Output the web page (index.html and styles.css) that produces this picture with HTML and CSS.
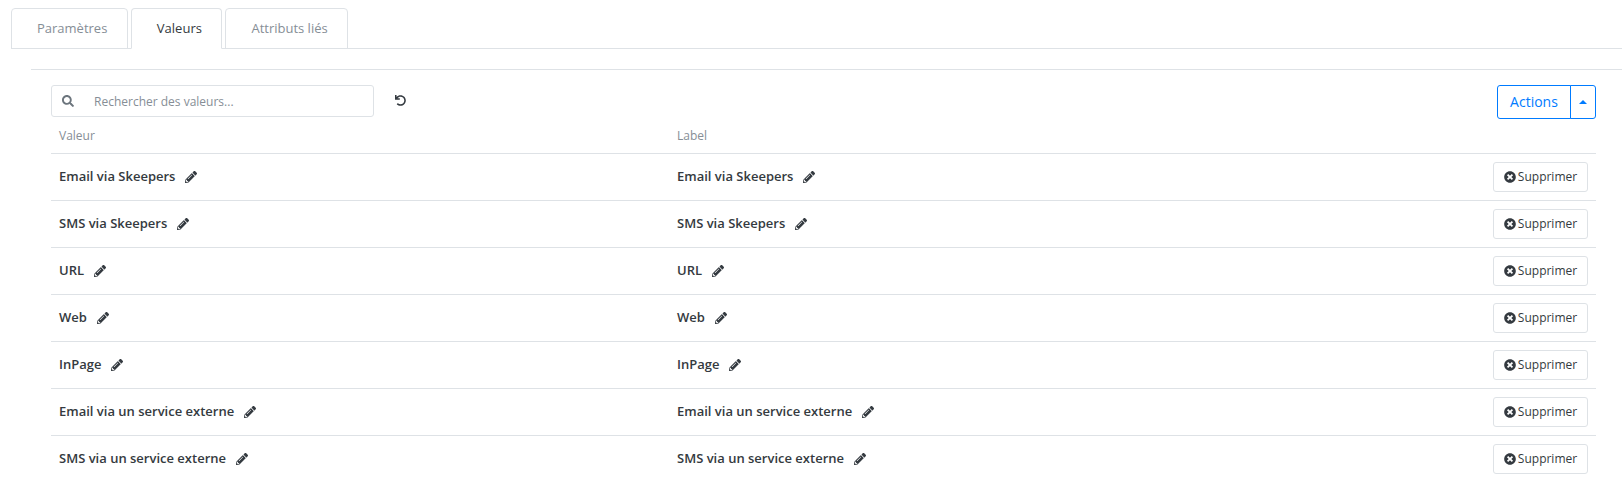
FILE: index.html
```html
<!DOCTYPE html>
<html lang="fr">
<head>
<meta charset="utf-8">
<title>Valeurs</title>
<link rel="stylesheet" href="styles.css">
</head>
<body>
<svg class="defs" width="0" height="0" aria-hidden="true">
  <symbol id="pencil" viewBox="0 0 512 512"><path d="M497.9 142.1l-46.1 46.1c-4.7 4.7-12.3 4.7-17 0l-111-111c-4.7-4.7-4.7-12.3 0-17l46.1-46.1c18.7-18.7 49.1-18.7 67.9 0l60.1 60.1c18.8 18.7 18.8 49.1 0 67.9zM284.2 99.8L21.6 362.4.4 483.9c-2.9 16.4 11.4 30.6 27.8 27.8l121.5-21.3 262.6-262.6c4.7-4.7 4.7-12.3 0-17l-111-111c-4.8-4.7-12.4-4.7-17.1 0zM124.1 339.9c-5.5-5.5-5.5-14.3 0-19.8l154-154c5.5-5.5 14.3-5.5 19.8 0s5.5 14.3 0 19.8l-154 154c-5.5 5.5-14.3 5.5-19.8 0zM88 424h48v36.3l-64.5 11.3-31.1-31.1L51.7 376H88v48z"/></symbol>
  <symbol id="times" viewBox="0 0 512 512"><path d="M256 8C119 8 8 119 8 256s111 248 248 248 248-111 248-248S393 8 256 8zm121.6 313.1c4.7 4.7 4.7 12.3 0 17L338 377.6c-4.7 4.7-12.3 4.7-17 0L256 312l-65.1 65.6c-4.7 4.7-12.3 4.7-17 0L134.4 338c-4.7-4.7-4.7-12.3 0-17l65.6-65-65.6-65.1c-4.7-4.7-4.7-12.3 0-17l39.6-39.6c4.7-4.7 12.3-4.7 17 0l65 65.7 65.1-65.6c4.7-4.7 12.3-4.7 17 0l39.6 39.6c4.7 4.7 4.7 12.3 0 17L312 256l65.6 65.1z"/></symbol>
</svg>
<nav class="tabs">
  <a class="tab">Paramètres</a>
  <a class="tab active">Valeurs</a>
  <a class="tab">Attributs liés</a>
</nav>
<main class="panel">
  <hr class="rule">
  <div class="content">
    <div class="toolbar">
      <label class="search">
        <svg class="search-icon" viewBox="0 0 512 512"><path d="M505 442.7L405.3 343c-4.5-4.5-10.6-7-17-7H372c27.6-35.3 44-79.7 44-128C416 93.1 322.9 0 208 0S0 93.1 0 208s93.1 208 208 208c48.3 0 92.7-16.4 128-44v16.3c0 6.4 2.5 12.5 7 17l99.7 99.7c9.4 9.4 24.6 9.4 33.9 0l28.3-28.3c9.4-9.4 9.4-24.6.1-34zM208 336c-70.7 0-128-57.2-128-128 0-70.7 57.2-128 128-128 70.7 0 128 57.2 128 128 0 70.7-57.2 128-128 128z"/></svg>
        <input class="search-input" type="text" placeholder="Rechercher des valeurs...">
      </label>
      <button class="reset" type="button" aria-label="Réinitialiser">
        <svg viewBox="0 0 512 512"><path d="M212.3 224.3H12c-6.6 0-12-5.4-12-12V12C0 5.4 5.4 0 12 0h48c6.6 0 12 5.4 12 12v78.1C117.8 39.3 184.3 7.5 258.2 8c136.9.5 246.4 111.6 245.8 248.6C503.400 393.300 392.300 504 255.500 504c-64.100 0-122.500-24.300-166.500-64.200-5.100-4.600-5.300-12.500-.500-17.400l34-34c4.500-4.500 11.700-4.700 16.400-.500C170.800 415.300 211.400 432 256 432c97.300 0 176-78.700 176-176 0-97.400-78.700-176-176-176-58.500 0-110.300 28.500-142.300 72.300h98.600c6.600 0 12 5.400 12 12v48c0 6.600-5.400 12-12 12z"/></svg>
      </button>
      <div class="actions">
        <button class="actions-main" type="button">Actions</button>
        <button class="actions-caret" type="button" aria-label="Ouvrir"><span class="caret"></span></button>
      </div>
    </div>
    <table class="values">
      <thead>
        <tr><th class="col-value">Valeur</th><th>Label</th><th></th></tr>
      </thead>
      <tbody>
        <tr><td><span class="cell">Email via Skeepers<svg class="edit"><use href="#pencil"/></svg></span></td><td><span class="cell">Email via Skeepers<svg class="edit"><use href="#pencil"/></svg></span></td><td class="right"><button class="del" type="button"><svg class="del-icon"><use href="#times"/></svg>Supprimer</button></td></tr>
        <tr><td><span class="cell">SMS via Skeepers<svg class="edit"><use href="#pencil"/></svg></span></td><td><span class="cell">SMS via Skeepers<svg class="edit"><use href="#pencil"/></svg></span></td><td class="right"><button class="del" type="button"><svg class="del-icon"><use href="#times"/></svg>Supprimer</button></td></tr>
        <tr><td><span class="cell">URL<svg class="edit"><use href="#pencil"/></svg></span></td><td><span class="cell">URL<svg class="edit"><use href="#pencil"/></svg></span></td><td class="right"><button class="del" type="button"><svg class="del-icon"><use href="#times"/></svg>Supprimer</button></td></tr>
        <tr><td><span class="cell">Web<svg class="edit"><use href="#pencil"/></svg></span></td><td><span class="cell">Web<svg class="edit"><use href="#pencil"/></svg></span></td><td class="right"><button class="del" type="button"><svg class="del-icon"><use href="#times"/></svg>Supprimer</button></td></tr>
        <tr><td><span class="cell">InPage<svg class="edit"><use href="#pencil"/></svg></span></td><td><span class="cell">InPage<svg class="edit"><use href="#pencil"/></svg></span></td><td class="right"><button class="del" type="button"><svg class="del-icon"><use href="#times"/></svg>Supprimer</button></td></tr>
        <tr><td><span class="cell">Email via un service externe<svg class="edit"><use href="#pencil"/></svg></span></td><td><span class="cell">Email via un service externe<svg class="edit"><use href="#pencil"/></svg></span></td><td class="right"><button class="del" type="button"><svg class="del-icon"><use href="#times"/></svg>Supprimer</button></td></tr>
        <tr><td><span class="cell">SMS via un service externe<svg class="edit"><use href="#pencil"/></svg></span></td><td><span class="cell">SMS via un service externe<svg class="edit"><use href="#pencil"/></svg></span></td><td class="right"><button class="del" type="button"><svg class="del-icon"><use href="#times"/></svg>Supprimer</button></td></tr>
      </tbody>
    </table>
  </div>
</main>
</body>
</html>
```
FILE: styles.css
```css
* { box-sizing: border-box; }
html, body { height: 481px; overflow: hidden; }
body {
  margin: 0;
  background: #fff;
  color: #343a40;
  font-family: "Open Sans", sans-serif;
  font-size: 13px;
  line-height: 1.5;
}
.defs { position: absolute; }
.tabs {
  display: flex;
  gap: 3px;
  margin: 8px 0 0 11px;
  height: 41px;
  border-bottom: 1px solid #dee2e6;
}
.tab {
  height: 41px;
  padding: 10px 19.5px 0 25px;
  border: 1px solid #dee2e6;
  border-radius: 4px 4px 0 0;
  color: #868e96;
  font-size: 13px;
}
.tab.active { color: #343a40; border-bottom-color: #fff; }
.panel { padding-left: 31px; }
.rule { margin: 20px 0 0; border: 0; border-top: 1px solid #dee2e6; }
.content { padding: 15px 26px 0 20px; }
.toolbar { display: flex; align-items: flex-start; }
.search { position: relative; display: block; width: 323px; }
.search-icon {
  position: absolute;
  left: 11px;
  top: 10px;
  width: 12px;
  height: 12px;
  fill: #6c757d;
}
.search-input {
  display: block;
  width: 100%;
  height: 32px;
  padding: 0 10px 0 42px;
  border: 1px solid #dee2e6;
  border-radius: 3px;
  font: 12px "Open Sans", sans-serif;
  color: #343a40;
}
.search-input::placeholder { color: #868e96; opacity: 1; }
.reset {
  width: 11px;
  height: 11px;
  margin: 10px 0 0 21px;
  padding: 0;
  border: 0;
  background: none;
}
.reset svg { display: block; width: 11px; height: 11px; fill: #343a40; }
.actions { display: flex; margin-left: auto; height: 34px; }
.actions-main, .actions-caret {
  border: 1px solid #007bff;
  background: #fff;
  color: #007bff;
  font: 14px "Open Sans", sans-serif;
}
.actions-main { width: 74px; padding: 0 0 2px; border-radius: 3px 0 0 3px; }
.actions-caret {
  width: 26px;
  margin-left: -1px;
  padding: 0;
  border-radius: 0 3px 3px 0;
  display: flex;
  align-items: center;
  justify-content: center;
}
.caret {
  width: 0;
  height: 0;
  border-left: 4px solid transparent;
  border-right: 4px solid transparent;
  border-bottom: 4px solid #007bff;
}
.values { width: 100%; margin-top: 0; border-collapse: collapse; table-layout: fixed; }
.values th {
  height: 34px;
  padding: 0 8px;
  border-bottom: 1px solid #dee2e6;
  color: #868e96;
  font-size: 12px;
  font-weight: 400;
  text-align: left;
  vertical-align: middle;
}
.col-value { width: 618px; }
.values td {
  height: 47px;
  padding: 0 8px;
  border-bottom: 1px solid #dee2e6;
  font-size: 13px;
  font-weight: 600;
  vertical-align: middle;
}
.values tr:last-child td { border-bottom: 0; }
.cell { display: inline-flex; align-items: center; }
.edit { width: 12px; height: 12px; margin-left: 10px; fill: #343a40; }
.right { text-align: right; }
.del {
  display: inline-flex;
  align-items: center;
  justify-content: center;
  width: 95px;
  height: 30px;
  padding: 0;
  border: 1px solid #dee2e6;
  border-radius: 3px;
  background: #fff;
  color: #343a40;
  font: 12px "Open Sans", sans-serif;
  vertical-align: middle;
}
.del-icon { width: 12px; height: 12px; margin-right: 2px; fill: #343a40; }
```
